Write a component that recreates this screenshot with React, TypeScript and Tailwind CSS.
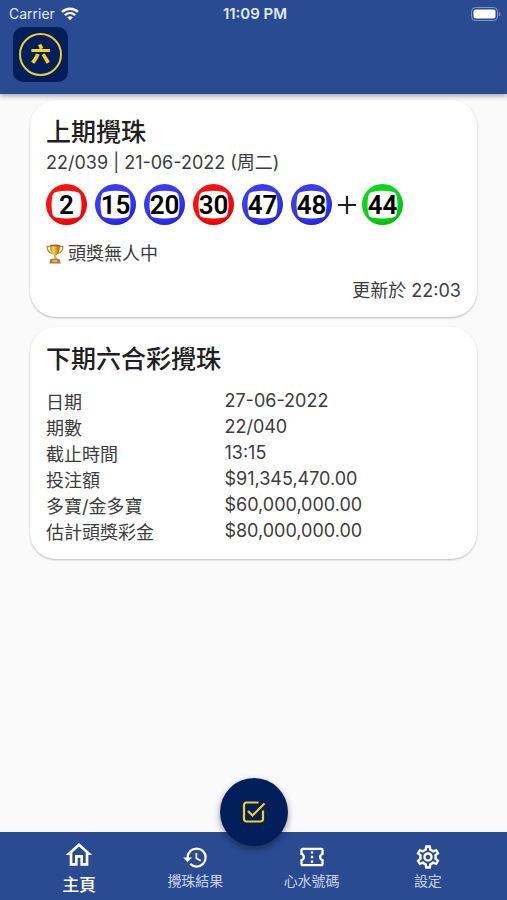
import type { ReactNode } from 'react';
import {
  MdHistory,
  MdOutlineConfirmationNumber,
  MdOutlineHome,
  MdOutlineSettings,
} from 'react-icons/md';

type BallColor = 'red' | 'blue' | 'green';

const BALL_COLORS: Record<BallColor, [string, string]> = {
  red: ['#fb1010', '#e80000'],
  blue: ['#3a3af2', '#2222dc'],
  green: ['#08d818', '#04bc0c'],
};

const DRAW: { value: number; color: BallColor }[] = [
  { value: 2, color: 'red' },
  { value: 15, color: 'blue' },
  { value: 20, color: 'blue' },
  { value: 30, color: 'red' },
  { value: 47, color: 'blue' },
  { value: 48, color: 'blue' },
];

const NEXT_DRAW: [string, string][] = [
  ['日期', '27-06-2022'],
  ['期數', '22/040'],
  ['截止時間', '13:15'],
  ['投注額', '$91,345,470.00'],
  ['多寶/金多寶', '$60,000,000.00'],
  ['估計頭獎彩金', '$80,000,000.00'],
];

function Ball({ value, color }: { value: number; color: BallColor }) {
  const [light, dark] = BALL_COLORS[color];
  const id = `ball-${color}-${value}`;
  return (
    <li className="grid size-[41px] place-items-center">
      <svg viewBox="0 0 41 41" className="col-start-1 row-start-1 size-full" aria-hidden="true">
        <defs>
          <radialGradient id={id} cx="0.45" cy="0.4" r="0.6">
            <stop offset="0.7" stopColor={light} />
            <stop offset="1" stopColor={dark} />
          </radialGradient>
        </defs>
        <circle cx="20.5" cy="20.5" r="20.5" fill={`url(#${id})`} />
        <path
          d="M10 8Q20.500 5.500 31 8Q34 8.500 34.500 11.500Q36.500 20.500 34.500 30Q34 33 31 33.500Q20.500 35.500 10 33.500Q7 33 6.500 30Q4.500 20.500 6.500 11.500Q7 8.500 10 8Z"
          fill="#fff"
        />
      </svg>
      <span className="col-start-1 row-start-1 font-[Roboto,'Liberation_Sans',sans-serif] text-[26px] leading-none font-semibold text-black">
        {value}
      </span>
    </li>
  );
}

function Trophy() {
  return (
    <svg viewBox="0 0 18 20" className="h-5 w-[18px]" aria-hidden="true">
      <defs>
        <linearGradient id="cup" x1="0" x2="1">
          <stop offset="0" stopColor="#c98a1c" />
          <stop offset="0.35" stopColor="#f7d063" />
          <stop offset="0.65" stopColor="#d99a22" />
          <stop offset="1" stopColor="#a8690f" />
        </linearGradient>
      </defs>
      <path
        d="M4.500 2.500H1.200C1 6 2.500 8.500 6 9.500M13.500 2.500h3.300C17 6 15.500 8.500 12 9.500"
        fill="none"
        stroke="#c58a24"
        strokeWidth="1.300"
      />
      <path
        d="M4 1h10c0 5-1 9-3.800 10.500V13c.3 1 1 1.700 1.800 2H6c.8-.3 1.500-1 1.800-2v-1.500C5 10 4 6 4 1Z"
        fill="url(#cup)"
      />
      <ellipse cx="9" cy="1.400" rx="5" ry="0.900" fill="#9a661a" />
      <path d="M4.500 15h9l1.200 4.500H3.300Z" fill="#b9743a" />
      <path d="M6.500 16h5v2h-5Z" fill="#e8b468" />
    </svg>
  );
}

function Wifi() {
  return (
    <svg viewBox="0 0 18 14" className="h-[14px] w-[18px]" fill="none" aria-hidden="true">
      <path d="M1 4.900C5.600.6 12.400.6 17 4.900" stroke="#fff" strokeWidth="2.500" />
      <path d="M3.900 8.100c3-2.700 7.200-2.700 10.200 0" stroke="#fff" strokeWidth="2.400" />
      <path d="M6.200 10.200c1.700-1.400 3.900-1.400 5.600 0L9 13.200Z" fill="#fff" />
    </svg>
  );
}

function Battery() {
  return (
    <svg viewBox="0 0 30 14" className="h-[14px] w-[30px]" aria-hidden="true">
      <rect x="0.500" y="0.500" width="26" height="13" rx="4" fill="none" stroke="#8293c4" />
      <rect x="2.500" y="2.500" width="22" height="9" rx="2" fill="#fff" />
      <path d="M28 5v4.500c1.700-.6 1.700-3.900 0-4.500Z" fill="#8293c4" />
    </svg>
  );
}

function Card({ title, children }: { title: string; children: ReactNode }) {
  return (
    <section className="rounded-[26px] bg-white px-4 py-[13px] shadow-[0_1px_2px_rgba(0,0,0,0.26)]">
      <h2 className="text-[25px] leading-[38px] font-medium text-[#202020]">{title}</h2>
      {children}
    </section>
  );
}

function NavItem({ icon, label, active }: { icon: ReactNode; label: string; active?: boolean }) {
  return (
    <a
      href="#"
      aria-current={active ? 'page' : undefined}
      className={
        active
          ? 'flex flex-1 flex-col items-center gap-px pt-[7px] text-[17px] leading-[26px] font-medium text-white'
          : 'flex flex-1 flex-col items-center pt-[11px] text-sm leading-5 text-[#c9d2e8]'
      }
    >
      <span className={active ? 'grid h-8 place-items-center' : 'grid h-7 place-items-center text-white'}>
        {icon}
      </span>
      {label}
    </a>
  );
}

export default function App() {
  return (
    <div className="flex min-h-screen flex-col bg-[#fafafa] font-[Inter,'Noto_Sans_CJK_TC',sans-serif] text-[18px] text-[#3c3c3c]">
      <header className="z-10 bg-[#2a4b92] pb-3 shadow-[0_2px_5px_rgba(0,0,0,0.35)]">
        <div className="grid h-[27px] grid-cols-3 items-center pr-[6px] pl-[9px] text-sm text-[#dfe9fa]">
          <div className="flex items-center gap-[6px]">
            Carrier
            <Wifi />
          </div>
          <div className="text-center text-[15px] leading-5 font-semibold">11:09 PM</div>
          <div className="flex justify-end">
            <Battery />
          </div>
        </div>
        <div className="ml-[13px] grid size-[55px] place-items-center rounded-[10px] bg-[#021f5b]">
          <div className="grid size-[43px] place-items-center rounded-full border-2 border-[#f0cb35] text-xl leading-none font-black text-[#fbd324]">
            六
          </div>
        </div>
      </header>

      <main className="flex flex-1 flex-col gap-[10px] px-[30px] pt-[6px] pb-16">
        <Card title="上期攪珠">
          <p className="leading-6">22/039 | 21-06-2022 (周二)</p>
          <ul className="mt-[9px] flex items-center gap-2">
            {DRAW.map((ball) => (
              <Ball key={ball.value} value={ball.value} color={ball.color} />
            ))}
            <li className="-mx-1 grid w-[22px] place-items-center" aria-label="特別號碼">
              <svg viewBox="0 0 18 18" className="size-[18px]" aria-hidden="true">
                <path d="M9 0v18M0 9h18" stroke="#222" strokeWidth="2.200" />
              </svg>
            </li>
            <Ball value={44} color="green" />
          </ul>
          <p className="mt-4 flex items-center gap-1 leading-[26px]">
            <Trophy />
            頭獎無人中
          </p>
          <p className="mt-[11px] text-right leading-[26px]">更新於 22:03</p>
        </Card>

        <Card title="下期六合彩攪珠">
          <table className="mt-3 w-full table-fixed border-collapse text-left">
            <tbody>
              {NEXT_DRAW.map(([label, value]) => (
                <tr key={label}>
                  <th scope="row" className="w-[43%] p-0 leading-[26px] font-normal">
                    {label}
                  </th>
                  <td className="p-0 align-top leading-[22px]">{value}</td>
                </tr>
              ))}
            </tbody>
          </table>
        </Card>
      </main>

      <nav className="relative flex h-[68px] bg-[#2a4b92] px-[21px]">
        <NavItem active icon={<MdOutlineHome size={32} />} label="主頁" />
        <NavItem icon={<MdHistory size={27} />} label="攪珠結果" />
        <NavItem icon={<MdOutlineConfirmationNumber size={28} />} label="心水號碼" />
        <NavItem icon={<MdOutlineSettings size={28} />} label="設定" />
        <button
          type="button"
          aria-label="對獎"
          className="absolute -top-[54px] left-1/2 grid size-[68px] -translate-x-1/2 place-items-center rounded-full bg-[#021f5b] shadow-[0_3px_7px_rgba(0,0,0,0.4)]"
        >
          <svg
            viewBox="0 0 24 24"
            className="size-6"
            fill="none"
            stroke="#f7cf22"
            strokeWidth="2.200"
            aria-hidden="true"
          >
            <path d="M16.500 2.500H4.500a2.500 2.500 0 0 0-2.500 2.500v14a2.500 2.500 0 0 0 2.500 2.500h14a2.500 2.500 0 0 0 2.500-2.500v-8.500" />
            <path d="m6 11 4.500 4.500L22.500 3.500" />
          </svg>
        </button>
      </nav>
    </div>
  );
}
